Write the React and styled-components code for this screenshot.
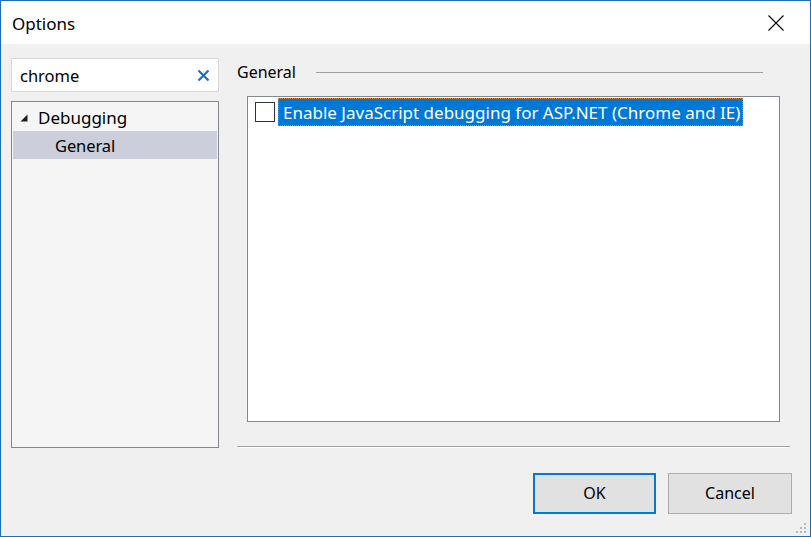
import React from "react";
import styled, { createGlobalStyle } from "styled-components";

const Global = createGlobalStyle`
  html, body { margin: 0; padding: 0; background: #f0f0f0; }
  body { font-family: "Noto Sans", "Open Sans", sans-serif; }
  * { box-sizing: border-box; }
`;

const Window = styled.div`
  width: 811px;
  height: 537px;
  border: 1px solid #1a6fb7;
  background: #f0f0f0;
  display: flex;
  flex-direction: column;
  position: relative;
  color: #000;
  font-size: 15px;
`;

const TitleBar = styled.div`
  height: 43px;
  background: #fff;
  display: flex;
  align-items: center;
  justify-content: space-between;
  padding: 0 26px 0 11px;
`;

const Title = styled.div`
  font-size: 17px;
  margin-top: 1px;
`;

const CloseIcon = styled.svg`
  width: 16px;
  height: 16px;
  margin-top: 1px;
`;

const Content = styled.div`
  display: grid;
  grid-template-columns: 208px 553px;
  column-gap: 18px;
  padding: 14px 0 0 10px;
`;

const LeftCol = styled.div`
  display: flex;
  flex-direction: column;
  gap: 9px;
`;

const SearchBox = styled.div`
  height: 34px;
  background: #fff;
  border: 1px solid #d9d9d9;
  display: flex;
  align-items: center;
  justify-content: space-between;
  padding: 0 8px 0 8px;
`;

const SearchText = styled.span`
  font-size: 16.5px;
  margin-top: 0px;
`;

const ClearIcon = styled.svg`
  width: 13px;
  height: 13px;
`;

const Tree = styled.div`
  height: 347px;
  background: #f5f5f5;
  border: 1px solid #828790;
  padding: 1px 1px 0 1px;
  display: flex;
  flex-direction: column;
`;

const TreeRow = styled.div`
  height: 28px;
  display: flex;
  align-items: center;
  padding-left: ${(p) => p.$indent}px;
  background: ${(p) => (p.$selected ? "#cccedb" : "transparent")};
  font-size: ${(p) => (p.$selected ? 16.5 : 17)}px;
  letter-spacing: ${(p) => (p.$selected ? -0.1 : 0)}px;
`;

const Expander = styled.svg`
  width: 8px;
  height: 8px;
  margin-right: 10px;
  margin-top: 1px;
`;

const RightCol = styled.div`
  display: flex;
  flex-direction: column;
`;

const GroupHeader = styled.div`
  height: 28px;
  display: flex;
  align-items: center;
  padding-right: 27px;
  font-size: 16px;
`;

const HeaderRule = styled.div`
  flex: 1;
  height: 1px;
  background: #a0a0a0;
  margin-left: 20px;
`;

const ListBox = styled.div`
  margin: 10px 10px 0 10px;
  height: 326px;
  background: #fff;
  border: 1px solid #828790;
  padding: 1px 0 0 7px;
`;

const CheckRow = styled.div`
  display: flex;
  align-items: center;
  height: 28px;
`;

const CheckBox = styled.div`
  width: 20px;
  height: 20px;
  border: 1px solid #333;
  background: #fff;
  margin-right: 3px;
`;

const CheckLabel = styled.span`
  height: 28px;
  display: flex;
  align-items: center;
  padding: 0 2px 0 4px;
  background: #0078d7;
  color: #fff;
  font-size: 17px;
  border: 1px dotted #d9822b;
`;

const Separator = styled.div`
  margin-top: 24px;
  height: 2px;
  border-top: 1px solid #a0a0a0;
  border-bottom: 1px solid #fff;
`;

const Footer = styled.div`
  display: flex;
  justify-content: flex-end;
  gap: 12px;
  padding: 25px 18px 0 0;
`;

const Button = styled.button`
  width: ${(p) => p.$w}px;
  height: 41px;
  background: #e1e1e1;
  border: ${(p) => (p.$default ? "2px solid #0078d7" : "1px solid #adadad")};
  font-family: inherit;
  font-size: 16px;
  color: #000;
  padding: 0 0 2px 0;
  cursor: default;
`;

const Grip = styled.svg`
  position: absolute;
  right: 3px;
  bottom: 2px;
  width: 12px;
  height: 12px;
`;

export default function App() {
  return (
    <>
      <Global />
      <Window>
        <TitleBar>
          <Title>Options</Title>
          <CloseIcon viewBox="0 0 16 16">
            <path d="M0.5 0.5 L15.5 15.5 M15.5 0.5 L0.5 15.5" stroke="#000" strokeWidth="1.1" fill="none" />
          </CloseIcon>
        </TitleBar>
        <Content>
          <LeftCol>
            <SearchBox>
              <SearchText>chrome</SearchText>
              <ClearIcon viewBox="0 0 13 13">
                <path d="M1.5 1.5 L11.5 11.5 M11.5 1.5 L1.5 11.5" stroke="#1e6fc8" strokeWidth="2.2" fill="none" />
              </ClearIcon>
            </SearchBox>
            <Tree>
              <TreeRow $indent={7}>
                <Expander viewBox="0 0 8 8">
                  <polygon points="7.5,0.5 7.5,7.5 0.5,7.5" fill="#1e1e1e" />
                </Expander>
                Debugging
              </TreeRow>
              <TreeRow $indent={42} $selected>
                General
              </TreeRow>
            </Tree>
          </LeftCol>
          <RightCol>
            <GroupHeader>
              General
              <HeaderRule />
            </GroupHeader>
            <ListBox>
              <CheckRow>
                <CheckBox />
                <CheckLabel>Enable JavaScript debugging for ASP.NET (Chrome and IE)</CheckLabel>
              </CheckRow>
            </ListBox>
            <Separator />
          </RightCol>
        </Content>
        <Footer>
          <Button $default $w={123}>OK</Button>
          <Button $w={124}>Cancel</Button>
        </Footer>
        <Grip viewBox="0 0 12 12">
          <g fill="#b8b8b8">
            <rect x="9" y="1" width="2" height="2" />
            <rect x="5" y="5" width="2" height="2" />
            <rect x="9" y="5" width="2" height="2" />
            <rect x="1" y="9" width="2" height="2" />
            <rect x="5" y="9" width="2" height="2" />
            <rect x="9" y="9" width="2" height="2" />
          </g>
        </Grip>
      </Window>
    </>
  );
}
